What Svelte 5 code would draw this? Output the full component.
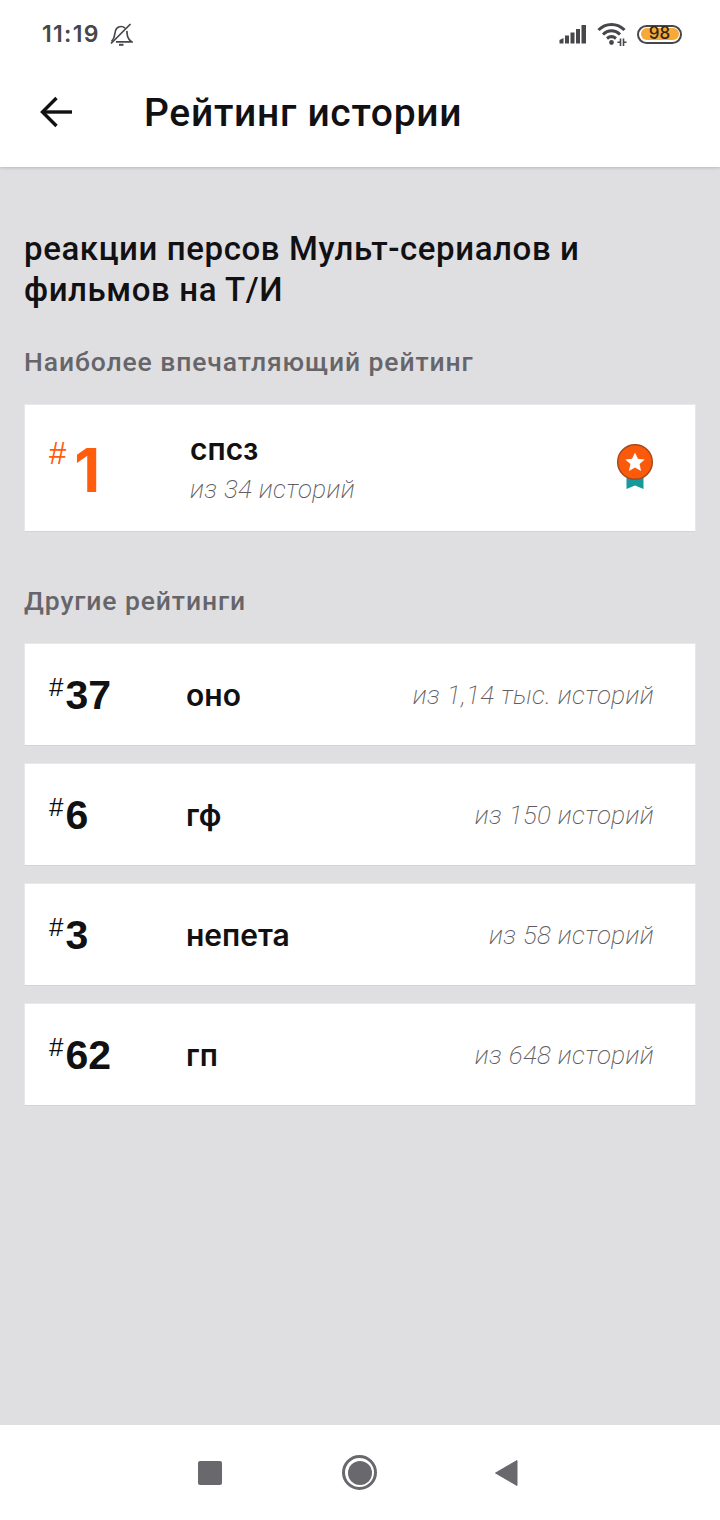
<script>
  const others = [
    { rank: 37, name: 'оно', total: 'из 1,14 тыс. историй' },
    { rank: 6, name: 'гф', total: 'из 150 историй' },
    { rank: 3, name: 'непета', total: 'из 58 историй' },
    { rank: 62, name: 'гп', total: 'из 648 историй' }
  ];
</script>

<div class="page">
  <header class="header">
    <div class="status">
      <div class="status-left">
        <span class="time">11:19</span>
        <svg class="bell" width="24" height="24" viewBox="0 0 24 24" fill="none" stroke="#47464a" stroke-width="1.7">
          <path d="M2 21.500 L21.500 2" />
          <path d="M2.500 19.500 C5 17 5.500 15 5.800 12 C6.200 7.500 8.500 4.500 12 4.500 C13.500 4.500 15 5.100 16 6.100" />
          <path d="M17.800 9 C18.300 11 18 13 18.800 15 C19.400 16.800 20.400 18.200 22.500 19.800 L7 19.800" />
          <path d="M10 22.800 L14.500 22.800" stroke-width="2" />
        </svg>
      </div>
      <div class="status-right">
        <svg width="28" height="20" viewBox="0 0 28 20" fill="#47464a">
          <path d="M0.500 16 L4.500 14 V19.500 H0.500 Z" />
          <rect x="6" y="11.500" width="4" height="8" />
          <rect x="11.500" y="8.500" width="4" height="11" />
          <rect x="17" y="5" width="4" height="14.500" />
          <rect x="22.500" y="1" width="4.500" height="18.500" />
        </svg>
        <svg class="wifi" width="30" height="24" viewBox="0 0 30 24" fill="none" stroke="#47464a" stroke-width="3">
          <path d="M1.500 8 C8.500 0.500 20.500 0.500 27.500 8" />
          <path d="M6 12.500 C11 7.500 18 7.500 23 12.500" />
          <path d="M10 16.500 C13 14 16 14 19 16.500" />
          <circle cx="14.500" cy="20.500" r="2.400" fill="#47464a" stroke="none" />
          <path d="M23.500 16.500 V24 M26.500 16.500 V24 M20.500 20.300 H23.500 M26.500 20.300 H29.500" stroke-width="1.600" />
        </svg>
        <div class="battery"><span class="level">98</span></div>
      </div>
    </div>
    <div class="toolbar">
      <svg class="back" width="34" height="32" viewBox="0 0 34 32" fill="none" stroke="#111013" stroke-width="3.400">
        <path d="M3 16 H33" />
        <path d="M17.500 2 L3.500 16 L17.500 30" />
      </svg>
      <h1>Рейтинг истории</h1>
    </div>
  </header>

  <main class="content">
    <h2 class="story">реакции персов Мульт-сериалов и фильмов на Т/И</h2>
    <h3 class="label first">Наиболее впечатляющий рейтинг</h3>
    <section class="card top">
      <div class="rank big">
        <span class="hash">#</span><span class="num">1</span>
      </div>
      <div class="top-info">
        <div class="top-name">спсз</div>
        <div class="total">из 34 историй</div>
      </div>
      <svg class="medal" width="38" height="48" viewBox="0 0 38 48">
        <path d="M10.500 26 H27.500 V46 L19 42.500 L10.500 46 Z" fill="#169a9c" />
        <circle cx="19" cy="19" r="17.300" fill="#fb5a0a" stroke="#a9481f" stroke-width="1.500" />
        <path d="M19 9.500 L21.900 15.800 L28.700 16.500 L23.600 21.100 L25 27.900 L19 24.500 L13 27.900 L14.400 21.100 L9.300 16.500 L16.100 15.800 Z" fill="#fff" />
      </svg>
    </section>

    <h3 class="label second">Другие рейтинги</h3>
    <div class="list">
      {#each others as item}
        <section class="card row">
          <div class="rank">
            <span class="hash">#</span><span class="num">{item.rank}</span>
          </div>
          <div class="row-name">{item.name}</div>
          <div class="total">{item.total}</div>
        </section>
      {/each}
    </div>
  </main>

  <nav class="nav">
    <span class="square"></span>
    <span class="circle"><span class="dot"></span></span>
    <svg width="24" height="28" viewBox="0 0 24 28"><path d="M23 1.500 V26.500 L1.500 14 Z" fill="#69686c" stroke="#69686c" stroke-linejoin="round" /></svg>
  </nav>
</div>

<style>
  :global(body) {
    margin: 0;
    background: #dfdee1;
  }
  .page {
    width: 720px;
    height: 1520px;
    display: flex;
    flex-direction: column;
    background: #dfdee1;
    font-family: Roboto, "Noto Sans", sans-serif;
    color: #111013;
  }
  .header {
    height: 167px;
    background: #fff;
    box-shadow: 0 1px 3px rgba(0, 0, 0, 0.18);
    flex: none;
  }
  .status {
    height: 68px;
    display: flex;
    justify-content: space-between;
    align-items: center;
    padding: 0 38px 0 42px;
    box-sizing: border-box;
  }
  .status-left {
    display: flex;
    align-items: center;
    gap: 9px;
  }
  .time {
    font-family: Inter, sans-serif;
    font-size: 23px;
    font-weight: 600;
    letter-spacing: 1.300px;
    color: #47464a;
  }
  .status-right {
    display: flex;
    align-items: center;
    gap: 10px;
  }
  .battery {
    width: 45px;
    height: 19px;
    box-sizing: border-box;
    border: 2.500px solid #47464a;
    border-radius: 10px;
    padding: 1.500px;
    display: flex;
  }
  .level {
    flex: 1;
    background: #f7a937;
    border-radius: 6px;
    font-family: Inter, sans-serif;
    font-size: 17px;
    font-weight: 500;
    line-height: 11px;
    text-align: center;
    color: #2f2517;
  }
  .toolbar {
    height: 99px;
    display: flex;
    align-items: flex-start;
    padding: 0 0 0 39px;
  }
  .back {
    margin-top: 28px;
    flex: none;
  }
  h1 {
    margin: 20px 0 0 71px;
    font-size: 39px;
    line-height: 50px;
    font-weight: 500;
    letter-spacing: 0.700px;
  }
  .content {
    flex: 1;
    padding: 61px 24px 0;
  }
  h2, h3 { margin: 0; }
  .story {
    font-size: 33px;
    line-height: 41px;
    font-weight: 500;
    letter-spacing: 0.600px;
    margin-right: 80px;
  }
  .label {
    font-size: 26.500px;
    line-height: 32px;
    font-weight: 500;
    letter-spacing: 0.900px;
    color: #66656a;
  }
  .label.first { margin-top: 36px; margin-bottom: 26px; }
  .label.second { margin-top: 53px; margin-bottom: 26px; }
  .card {
    background: #fff;
    border: 1px solid #e8e7ea;
    border-bottom-color: #d3d2d5;
    box-sizing: border-box;
    display: flex;
    align-items: center;
  }
  .top {
    height: 128px;
    padding: 0 41px 0 24px;
  }
  .rank {
    display: flex;
    align-items: flex-start;
    flex: none;
    width: 137px;
    font-family: "Liberation Sans", Arial, sans-serif;
  }
  .hash {
    font-size: 26px;
    line-height: 28px;
    margin-top: 3px;
    margin-right: 2px;
  }
  .num {
    font-size: 41px;
    line-height: 50px;
    font-weight: 700;
  }
  .big {
    width: 141px;
    color: #ff5c0c;
    margin-top: 4px;
    font-family: Inter, sans-serif;
  }
  .big .hash {
    font-family: "Liberation Sans", Arial, sans-serif;
    font-size: 31px;
    line-height: 34px;
    margin-right: 8px;
  }
  .big .num { font-size: 60px; line-height: 72px; font-weight: 700; }
  .top-info { flex: 1; }
  .top-name {
    font-family: Inter, sans-serif;
    font-size: 30px;
    line-height: 38px;
    font-weight: 600;
  }
  .total {
    font-size: 26px;
    line-height: 34px;
    font-weight: 200;
    font-style: italic;
    letter-spacing: 0.320px;
    color: #5f5e63;
    margin-top: 4px;
  }
  .medal { margin-top: -2px; flex: none; }
  .list {
    display: flex;
    flex-direction: column;
    gap: 17px;
  }
  .row {
    height: 103px;
    padding: 0 41px 0 24px;
  }
  .row-name {
    flex: 1;
    font-family: Inter, sans-serif;
    font-size: 30px;
    line-height: 40px;
    font-weight: 600;
  }
  .row .total { margin-top: 0; }
  .nav {
    height: 95px;
    flex: none;
    background: #fff;
    display: flex;
    align-items: center;
    padding-left: 198px;
    box-sizing: border-box;
  }
  .square {
    width: 24px;
    height: 24px;
    background: #69686c;
    border-radius: 2px;
    margin-right: 120px;
    flex: none;
  }
  .circle {
    width: 35px;
    height: 35px;
    box-sizing: border-box;
    border: 3px solid #69686c;
    border-radius: 50%;
    display: flex;
    align-items: center;
    justify-content: center;
    margin-right: 117px;
    flex: none;
  }
  .dot {
    width: 24px;
    height: 24px;
    border-radius: 50%;
    background: #69686c;
    flex: none;
  }
</style>
